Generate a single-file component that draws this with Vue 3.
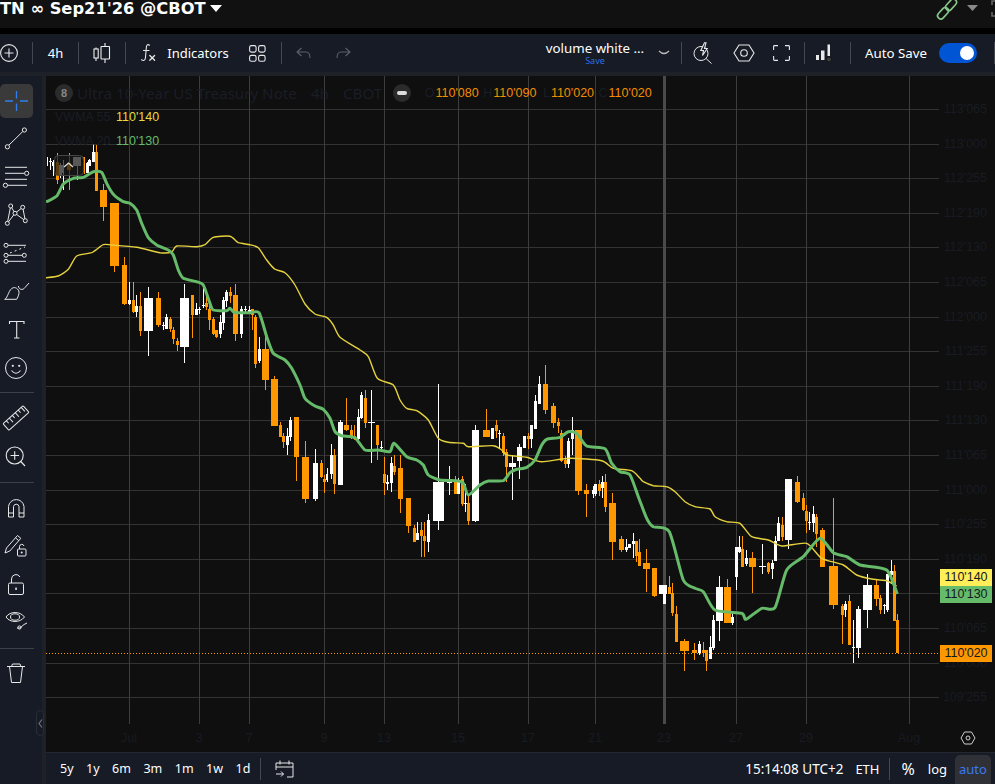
<script setup>
const z = (o, ox, oy) => o.map(([x, a, b, c, d, k, w]) => ({
  x: ox + x / 3, wt: oy + a / 3, wb: oy + b / 3, bt: oy + c / 3, bb: oy + d / 3, k, w: w / 3,
}))
const c7 = [
  [20,50,78,60,62,'w',3],[30,55,90,62,65,'w',9],[38,60,108,65,78,'w',6],[52,38,130,65,120,'o',9],[60,70,115,75,105,'w',9],
  [70,60,150,75,100,'w',6],[88,38,150,68,90,'o',12],[112,50,118,52,80,'w',24],[131,50,100,52,97,'o',6],[140,65,97,68,97,'w',9],
  [148,58,80,60,78,'w',8],[160,12,65,36,65,'w',9],[169,15,152,36,152,'o',9],[190,133,245,150,200,'o',21],[223,190,398,190,378,'o',27],
  [253,352,497,375,492,'o',15],[268,427,497,480,492,'w',8],[280,427,520,480,516,'o',9],[289,465,530,498,516,'w',9],[301,457,588,498,573,'o',9],
  [325,442,650,475,573,'w',27],[355,457,563,475,557,'o',15],[370,545,570,554,557,'w',9],[379,522,568,532,567,'w',9],[391,532,578,538,568,'o',9],
  [400,560,612,570,597,'o',9],[412,595,635,603,615,'o',9],[433,432,668,475,621,'w',27],[457,465,593,465,525,'o',9],[469,490,525,507,525,'w',9],
  [477,500,522,508,511,'w',9],[490,433,505,496,499,'w',9],[499,465,510,489,500,'o',8],[508,490,570,507,540,'o',9],[520,532,585,537,582,'o',8],
  [529,570,593,570,590,'o',9],[541,525,593,546,582,'w',9],[550,472,570,480,550,'w',8],[559,450,500,455,482,'w',8],[571,442,490,456,468,'o',8],
  [586,432,602,465,582,'o',15],[604,498,594,508,582,'w',9],[616,498,520,508,511,'w',9],[628,498,520,510,515,'w',9],[637,510,570,508,525,'o',9],
  [646,525,683,530,672,'o',9],
]
const c11 = [
  [13,-10,68,27,62,'w',8],[31,-10,150,27,120,'o',21],[58,108,258,117,258,'o',21],[76,247,290,255,290,'o',9],[85,280,326,288,305,'o',8],
  [97,265,345,288,315,'w',8],[106,232,305,240,290,'w',8],[124,232,425,232,353,'o',15],[151,303,488,351,476,'o',21],[181,327,482,369,476,'w',15],
  [199,361,415,369,410,'o',8],[208,405,458,418,428,'o',9],[217,385,428,403,420,'w',6],
]
const c8 = [
  [94,282,386,316,374,'w',9],[103,298,434,316,404,'o',9],[121,210,405,216,404,'w',15],[139,144,243,226,242,'o',15],[154,225,268,240,265,'o',8],
  [163,226,270,258,268,'o',8],[175,178,273,202,268,'w',9],[184,127,208,135,205,'w',8],[196,120,233,144,219,'o',9],[214,120,338,216,219,'w',20],
  [232,225,330,225,285,'o',9],[244,272,295,291,294,'w',8],[253,320,434,372,399,'o',9],[262,375,420,396,403,'w',9],[274,322,428,339,399,'w',9],
  [283,315,375,348,366,'o',9],[301,316,491,354,446,'o',15],[325,444,548,444,527,'o',15],[343,525,575,534,575,'o',9],[352,517,570,549,570,'w',8],
  [364,517,623,541,560,'o',9],[373,517,623,559,575,'o',9],[385,492,605,510,575,'w',9],[415,102,539,396,513,'w',33],[448,348,434,387,399,'w',15],
  [466,378,432,396,432,'o',9],[475,385,432,390,432,'w',8],[487,378,467,387,461,'o',9],[496,402,486,459,462,'w',9],[505,432,524,459,512,'o',9],
  [526,225,516,240,513,'w',21],[559,177,262,240,261,'o',21],[577,235,267,235,267,'w',9],[589,210,265,225,243,'o',8],[598,240,298,249,252,'w',9],
  [610,250,320,258,309,'o',9],[619,297,396,306,351,'o',9],[637,316,452,339,351,'w',21],[658,283,387,291,333,'w',15],[673,258,294,258,294,'w',9],
  [685,250,297,258,267,'o',9],[694,225,295,225,267,'w',9],[706,135,237,153,237,'w',9],[718,79,162,102,162,'w',9],[736,45,192,102,180,'o',15],
  [760,159,234,168,219,'o',15],[775,205,250,216,228,'o',9],[784,240,336,250,333,'o',9],[796,318,354,330,342,'o',9],[805,265,355,273,342,'w',9],
  [817,201,316,240,267,'w',9],[835,240,435,240,423,'o',21],[859,402,500,420,432,'o',15],[878,408,444,420,432,'w',9],[886,402,438,402,432,'w',9],
  [898,390,438,402,423,'o',9],[907,378,444,396,414,'w',9],[916,372,486,396,471,'o',9],[937,429,630,459,576,'o',21],[964,558,606,567,600,'o',15],
  [979,567,606,591,600,'w',9],[988,582,594,582,594,'w',9],[1000,550,624,573,582,'w',9],[1009,573,636,573,618,'o',9],
]
const c9 = [
  [58,238,320,276,318,'o',9],[79,268,398,309,327,'o',21],[103,324,412,324,408,'o',15],[121,375,402,375,402,'w',9],[128,375,402,375,402,'w',21],
  [133,375,432,402,432,'w',9],[148,348,402,381,402,'o',9],[157,370,468,399,459,'o',8],[169,438,546,462,546,'o',8],[193,537,632,543,573,'o',27],
  [223,550,600,570,580,'o',15],[238,543,585,552,580,'w',9],[250,545,590,570,579,'o',9],[259,570,632,570,603,'o',9],[271,528,597,561,597,'w',9],
  [280,465,570,480,564,'w',9],[298,348,542,381,483,'w',21],[322,357,489,381,489,'o',21],[337,462,495,470,489,'w',8],[349,260,390,261,351,'w',9],
  [358,228,280,261,276,'w',8],[367,228,321,267,321,'o',9],[379,270,318,294,312,'w',9],[397,276,399,294,321,'o',21],[427,252,342,317,320,'w',21],
  [445,306,342,309,336,'o',9],[457,300,357,309,327,'w',9],[466,228,303,243,303,'w',9],[475,170,243,189,243,'w',9],[487,172,243,195,231,'o',9],
  [505,57,267,57,240,'w',21],[532,48,129,66,126,'o',15],[550,99,153,114,150,'o',9],[559,135,218,153,183,'o',9],[568,156,210,186,189,'w',9],
  [580,138,217,162,189,'w',9],[589,162,262,171,222,'o',9],[607,204,322,210,321,'o',15],[640,114,447,318,435,'o',27],[667,432,552,438,465,'o',9],
  [676,423,471,432,450,'w',9],[688,405,556,423,555,'o',9],[700,480,609,561,564,'w',9],[715,438,594,447,564,'w',15],[742,342,504,375,450,'w',27],
  [769,360,438,375,417,'o',15],[781,405,462,414,450,'o',9],[793,432,462,436,439,'w',9],[802,342,456,342,450,'w',9],[814,300,372,333,345,'w',9],
  [823,316,483,333,483,'o',9],[832,462,580,480,580,'o',9],
]
const candles = [...z(c7, 40, 140), ...z(c11, 255, 340), ...z(c8, 300, 350), ...z(c9, 620, 460)].map((c) => {
  const w = Math.max(1, Math.round(c.w))
  const cx = Math.round(c.x)
  return {
    wx: cx, wy: Math.round(c.wt), wh: Math.max(1, Math.round(c.wb - c.wt)),
    bx: cx - Math.floor(w / 2), by: Math.round(c.bt), bw: w, bh: Math.max(1, Math.round(c.bb - c.bt)),
    col: c.k === 'o' ? '#ff9800' : '#ffffff',
  }
})
const conv = (pts, ox, oy) => pts.map(([x, y]) => [ox + x / 3, oy + y / 3])
const smooth = (p) => {
  let d = `M${p[0][0].toFixed(1)} ${p[0][1].toFixed(1)}`
  const t = 9
  for (let i = 0; i < p.length - 1; i++) {
    const a = p[i - 1] || p[i], b = p[i], c = p[i + 1], e = p[i + 2] || c
    d += `C${(b[0] + (c[0] - a[0]) / t).toFixed(1)} ${(b[1] + (c[1] - a[1]) / t).toFixed(1)} ${(c[0] - (e[0] - b[0]) / t).toFixed(1)} ${(c[1] - (e[1] - b[1]) / t).toFixed(1)} ${c[0].toFixed(1)} ${c[1].toFixed(1)}`
  }
  return d
}
const green = smooth([
  ...conv([[18,186],[50,168],[70,132],[100,115],[130,112],[160,95],[185,97],[200,130],[222,165],[250,185],[270,190],[290,210],[305,250],[325,293],[350,315],[385,330],[400,345],[415,390],[430,415],[470,425],[490,435],[510,490],[520,510],[560,512],[570,505],[585,518],[630,518],[657,518],[680,590]], 40, 140),
  ...conv([[55,40],[90,60],[110,85]], 255, 340),
  ...conv([[0,105],[15,145],[45,168],[70,178],[90,205],[105,245],[125,257],[165,263],[195,300],[235,300],[270,305],[282,280],[320,320],[350,330],[370,345],[385,375],[420,390],[470,392],[490,400],[505,435],[540,405],[565,393],[610,392],[630,368],[650,358],[680,352],[705,330],[725,285],[740,268],[780,262],[805,245],[830,250],[860,288],[915,296],[935,340],[960,365],[990,375]], 300, 350),
  ...conv([[55,110],[80,175],[100,200],[148,215],[190,360],[225,385],[250,395],[285,450],[365,460],[378,478],[425,445],[465,443],[500,330],[550,290],[600,235],[640,278],[680,290],[720,315],[800,330],[832,402]], 620, 460),
])
const yellow = smooth([
  ...conv([[18,413],[55,408],[85,388],[110,348],[155,338],[190,314],[215,315],[290,322],[360,338],[395,336],[410,318],[470,320],[495,314],[520,292],[570,289],[595,308],[630,314],[655,323],[680,360],[705,388],[735,398],[765,435],[795,492],[825,522],[860,532],[880,555],[900,592]], 40, 140),
  ...conv([[180,0],[205,20],[232,85],[280,105],[300,150],[320,175],[350,182],[385,210],[415,265],[445,277],[490,280],[505,290],[580,287],[605,300],[620,315],[680,322],[725,335],[810,325],[905,332],[940,355],[995,362],[1020,385]], 300, 350),
  ...conv([[70,65],[100,77],[140,80],[165,95],[195,125],[225,140],[270,147],[285,170],[320,185],[360,190],[395,230],[445,240],[485,258],[560,250],[605,295],[670,315],[710,345],[760,358],[800,362],[830,378]], 620, 460),
])
const hLines = Array.from({ length: 18 }, (_, i) => Math.round(109 + i * 34.6))
const vLines = [129, 199, 249, 324, 384, 458, 528, 595, 736, 806, 909]
const prices = ["113'065","113'000","112'255","112'190","112'130","112'065","112'000","111'255","111'190","111'130","111'065","111'000","110'255","110'190","110'130","110'065","110'000","109'255"]
const axis = [['Jul',129],['3',199],['7',249],['9',324],['13',384],['15',458],['17',528],['21',595],['23',664],['27',736],['29',806],['Aug',909]]
const ranges = ['5y', '1y', '6m', '3m', '1m', '1w', '1d']
</script>

<template>
  <div class="app">
    <header class="top">
      <div class="title">TN ∞ Sep21'26 @CBOT</div>
      <svg class="title-caret" width="12" height="8" viewBox="0 0 12 8"><path d="M0 0H12L6 7Z" fill="#fff"/></svg>
      <div class="top-space"></div>
      <svg class="top-right" width="60" height="28" viewBox="935 0 60 28">
        <g fill="none" stroke="#86c98a" stroke-width="1.600">
          <rect x="936.500" y="10" width="13" height="6.500" rx="3.200" transform="rotate(-48 943 13.200)"/>
          <rect x="944.500" y="1.500" width="13" height="6.500" rx="3.200" transform="rotate(-48 951 4.700)"/>
        </g>
        <path d="M967 5H978L972.500 11Z" fill="#8a8a8a"/>
        <path d="M995 1H992V5M992 12V16H995" fill="none" stroke="#666" stroke-width="1.600"/>
      </svg>
    </header>
    <div class="black"></div>

    <nav class="toolbar">
      <div class="cell c-plus"><svg width="18" height="18" viewBox="0 0 18 18"><g fill="none" stroke="#e8e8e8" stroke-width="1.100"><circle cx="9" cy="9" r="8.400"/><path d="M9 4.500V13.500M4.500 9H13.500"/></g></svg></div>
      <i class="sep"></i>
      <div class="cell c-4h">4h</div>
      <i class="sep"></i>
      <div class="cell c-candle"><svg width="18" height="22" viewBox="0 0 18 22"><g fill="none" stroke="#eee" stroke-width="1.100"><rect x="1" y="7" width="4.200" height="9"/><path d="M3 5.500V7M3 16V19"/><rect x="8" y="4.500" width="8.500" height="12.500" rx=".5"/><path d="M12 1V4.500M12 17V21"/></g></svg></div>
      <i class="sep"></i>
      <div class="cell c-fx"><svg width="16" height="20" viewBox="0 0 16 20"><g fill="none" stroke="#e8e8e8" stroke-width="1.100" stroke-linecap="round"><path d="M9.500 2.200C7.500 .8 6.600 2 6.400 4L5.400 15C5.200 17.600 3.500 18 1.500 16.800M3.500 7.500H9"/><path d="M9.800 12.500L14.600 17.300M14.600 12.500L9.800 17.300" stroke-width="1.300"/></g></svg></div>
      <div class="cell c-ind">Indicators</div>
      <div class="cell c-grid"><svg width="17" height="17" viewBox="0 0 17 17"><g fill="none" stroke="#e8e8e8" stroke-width="1.100"><rect x=".6" y=".6" width="6.500" height="6.500" rx="1.800"/><rect x="9.600" y=".6" width="6.500" height="6.500" rx="1.800"/><rect x=".6" y="10.400" width="6.500" height="5.800" rx="1.800"/><rect x="9.600" y="10.400" width="6.500" height="5.800" rx="1.800"/></g></svg></div>
      <i class="sep"></i>
      <div class="cell c-undo"><svg width="15" height="12" viewBox="0 0 15 12"><path d="M5.500 1L1 5L5.500 9M1 5H10C12.500 5 14 7 14 11" fill="none" stroke="#5d6069" stroke-width="1.100"/></svg></div>
      <div class="cell c-redo"><svg width="15" height="12" viewBox="0 0 15 12"><path d="M9.500 1L14 5L9.500 9M14 5H5C2.500 5 1 7 1 11" fill="none" stroke="#5d6069" stroke-width="1.100"/></svg></div>
      <div class="grow"></div>
      <div class="cell c-layout"><div class="lname">volume white ...</div><div class="lsave">Save</div></div>
      <div class="cell c-chev"><svg width="12" height="6" viewBox="0 0 12 6"><path d="M1 1Q6 6 11 1" fill="none" stroke="#bbb" stroke-width="1.200"/></svg></div>
      <i class="sep"></i>
      <div class="cell c-bolt"><svg width="20" height="22" viewBox="0 0 20 22"><g fill="none" stroke="#e8e8e8" stroke-width="1"><circle cx="8" cy="11.500" r="7"/><path d="M13 16.500L18.500 21.500"/><path d="M11.500 .8L7.800 8.500H10.500L9.500 13.500L14.200 6.500H11.500L13 .8Z" fill="#161b26" stroke-width="1.100"/></g></svg></div>
      <div class="cell c-hex"><svg width="22" height="18" viewBox="0 0 22 18"><g fill="none" stroke="#e8e8e8" stroke-width="1.100"><path d="M6 1H16L21 9L16 17H6L1 9Z"/><circle cx="11" cy="9" r="3.300"/></g></svg></div>
      <div class="cell c-full"><svg width="17" height="16" viewBox="0 0 17 16"><path d="M.6 5V1.500Q.6 .6 1.500 .6H5M12 .6H15.500Q16.400 .6 16.400 1.500V5M16.400 11V14.500Q16.400 15.400 15.500 15.400H12M5 15.400H1.500Q.6 15.400 .6 14.500V11" fill="none" stroke="#e8e8e8" stroke-width="1.100"/></svg></div>
      <div class="c-gap"></div>
      <i class="sep"></i>
      <div class="cell c-bars"><svg width="18" height="18" viewBox="0 0 18 18"><path d="M1 11H4V16H1ZM6 6.500H9.500V16H6Z" fill="#e8e8e8"/><path d="M12.500 .5H15V12H12.500Z" fill="#e8e8e8"/><circle cx="14" cy="15.500" r="2.500" fill="#3a3a3a" stroke="#000" stroke-width=".5"/></svg></div>
      <i class="sep"></i>
      <div class="cell c-auto">Auto Save</div>
      <div class="toggle"><span class="knob"></span></div>
      <div class="c-tail"></div>
      <i class="sep"></i>
    </nav>
    <div class="strip"></div>

    <div class="main">
      <aside class="tools">
        <div class="tool t-cursor"><svg width="33" height="34" viewBox="0 0 33 34"><path d="M16.500 7V14.500M16.500 19.500V27M5 17H13M20 17H28" stroke="#2f80ed" stroke-width="1.300" fill="none"/></svg></div>
        <div class="tool"><svg width="33" height="38" viewBox="0 0 33 38"><g fill="none" stroke="#e8e8e8" stroke-width="1"><path d="M9 26L22.800 12.500"/><circle cx="7.400" cy="27.800" r="2.100"/><circle cx="24.400" cy="11" r="2.100"/></g></svg></div>
        <div class="tool"><svg width="33" height="38" viewBox="0 0 33 38"><g fill="none" stroke="#e8e8e8" stroke-width="1"><path d="M5 10.300H27M5 16.300H24.500M5 22.300H27M7.500 28.300H27"/><circle cx="26.700" cy="16.300" r="2.100"/><circle cx="5.400" cy="28.300" r="2.100"/></g></svg></div>
        <div class="tool"><svg width="33" height="38" viewBox="0 0 33 38"><g fill="none" stroke="#e8e8e8" stroke-width="1"><path d="M10.700 10L15 17.300L22.700 11.300L25.300 24.700L15 17.300L7.300 27.300L10.700 10"/><g fill="#161b26"><circle cx="10.700" cy="10" r="2"/><circle cx="22.700" cy="11.300" r="2"/><circle cx="15" cy="17.300" r="2"/><circle cx="7.300" cy="27.300" r="2"/><circle cx="25.300" cy="24.700" r="2"/></g></g></svg></div>
        <div class="tool"><svg width="33" height="38" viewBox="0 0 33 38"><g fill="none" stroke="#e8e8e8" stroke-width="1"><path d="M8 11.300H26M8 21.300H22.300M8 27.300H26"/><path d="M10 19L25 13" stroke-dasharray="2 3"/><circle cx="6" cy="11.300" r="2"/><circle cx="6" cy="21.300" r="2"/><circle cx="24.300" cy="21.300" r="2"/><circle cx="6" cy="27.300" r="2"/></g></svg></div>
        <div class="tool"><svg width="33" height="38" viewBox="0 0 33 38"><g fill="none" stroke="#e8e8e8" stroke-width="1"><path d="M4.700 27.300C8 26 8.500 17 13.300 15.700C16.500 15 19.500 18 19 21.300C18.500 24 17.500 26 16.700 27.300Z"/><path d="M18.300 14C19 18 23 18.500 25 15.500L29 11"/></g></svg></div>
        <div class="tool"><svg width="33" height="38" viewBox="0 0 33 38"><g fill="none" stroke="#e8e8e8" stroke-width="1.100"><path d="M9.500 13V10.500H24V13M16.700 10.500V27M14 27H19.500"/></g></svg></div>
        <div class="tool"><svg width="33" height="38" viewBox="0 0 33 38"><g fill="none" stroke="#e8e8e8" stroke-width="1"><circle cx="16" cy="19" r="10.500"/><path d="M11.500 21.500Q16 27 20.500 21.500" stroke-width="1.100"/></g><circle cx="12.800" cy="16.800" r="1.100" fill="#e8e8e8"/><circle cx="19.200" cy="16.800" r="1.100" fill="#e8e8e8"/></svg></div>
        <div class="rule r-a"></div>
        <div class="tool"><svg width="33" height="38" viewBox="0 0 33 38"><g transform="rotate(-42 16 19)" fill="none" stroke="#e8e8e8" stroke-width="1"><rect x="2.500" y="14.500" width="27" height="9" rx="1"/><path d="M7 14.500V18M11 14.500V20M15 14.500V18M19 14.500V20M23 14.500V18M27 14.500V20"/></g></svg></div>
        <div class="tool"><svg width="33" height="38" viewBox="0 0 33 38"><g fill="none" stroke="#e8e8e8" stroke-width="1.100"><circle cx="14.700" cy="17.500" r="8.500"/><path d="M20.800 23.500L25 28"/><path d="M10.500 17.500H19M14.700 13.300V21.800"/></g></svg></div>
        <div class="rule r-b"></div>
        <div class="tool"><svg width="33" height="38" viewBox="0 0 33 38"><g fill="none" stroke="#e8e8e8" stroke-width="1"><path d="M8.500 28V17.500A7.800 7.800 0 0 1 24 17.500V28H19V17.500A2.800 2.800 0 0 0 13.500 17.500V28Z"/><path d="M8.500 24H13.500M19 24H24"/></g></svg></div>
        <div class="tool"><svg width="33" height="38" viewBox="0 0 33 38"><g fill="none" stroke="#e8e8e8" stroke-width="1"><path d="M5 26L6.500 21L17.500 8.500L20.800 11.300L9.800 24L5 26ZM15.500 10.800L18.800 13.700"/><rect x="17.500" y="22" width="8.500" height="7" rx="1"/><path d="M19.500 22V19.500A2.300 2.300 0 0 1 24 19"/></g><circle cx="21.700" cy="25.500" r="1" fill="#e8e8e8"/></svg></div>
        <div class="tool"><svg width="33" height="38" viewBox="0 0 33 38"><g fill="none" stroke="#e8e8e8" stroke-width="1"><rect x="8.500" y="18" width="15" height="11.500" rx="1.500"/><path d="M11.500 18V14A4.500 4.500 0 0 1 20 12"/></g><rect x="15.300" y="22.500" width="1.500" height="2.500" fill="#e8e8e8"/></svg></div>
        <div class="tool t-eye"><svg width="33" height="38" viewBox="0 0 33 38"><g fill="none" stroke="#e8e8e8" stroke-width="1"><path d="M6 15C10 9 20 9 24.500 15C20 21 10 21 6 15Z"/><ellipse cx="15" cy="15" rx="4.500" ry="3.200"/><path d="M17 26L20 26L24 22.500L27 21" /><circle cx="19.500" cy="25.500" r="1.600"/></g></svg></div>
        <div class="rule r-c"></div>
        <div class="tool"><svg width="33" height="38" viewBox="0 0 33 38"><g fill="none" stroke="#e8e8e8" stroke-width="1"><path d="M7 11.500H25M11.500 11.500L12.500 9H20L21 11.500"/><path d="M9.500 11.500L11.500 27.500H20.500L22.500 11.500"/></g></svg></div>
        <div class="handle"><svg width="5" height="9" viewBox="0 0 5 9"><path d="M4 .5L1 4.500L4 8.500" fill="none" stroke="#70737b" stroke-width="1.200"/></svg></div>
      </aside>
      <div class="vstrip"></div>
      <div class="right">
        <section class="chart">
          <svg class="plot" width="949" height="676" viewBox="46 76 949 676">
            <rect v-for="y in hLines" :key="'h'+y" x="46" :y="y" width="893" height="1" fill="#333333"/>
            <rect v-for="x in vLines" :key="'v'+x" :x="x" y="76" width="1" height="648" fill="#3d3d3d"/>
            <rect x="663" y="76" width="3" height="648" fill="#4a4a4a"/>
            <text v-for="(p, i) in prices" :key="p" class="ptxt" x="987" :y="hLines[i] + 4" text-anchor="end">{{ p }}</text>
            <text v-for="a in axis" :key="a[0]+a[1]" class="atxt" :x="a[1]" y="742" text-anchor="middle">{{ a[0] }}</text>
            <g shape-rendering="crispEdges">
              <template v-for="(c, i) in candles" :key="i">
                <rect :x="c.wx" :y="c.wy" width="1" :height="c.wh" :fill="c.col"/>
                <rect :x="c.bx" :y="c.by" :width="c.bw" :height="c.bh" :fill="c.col"/>
              </template>
            </g>
            <path :d="yellow" fill="none" stroke="#e6d23e" stroke-width="1.400"/>
            <path :d="green" fill="none" stroke="#66bb6a" stroke-width="3" stroke-linejoin="round"/>
            <line x1="46" y1="653.500" x2="940" y2="653.500" stroke="#ff9800" stroke-width="1" stroke-dasharray="1 2"/>
            <rect x="54.500" y="155.500" width="29" height="20" rx="4" fill="rgba(24,24,24,.72)" stroke="#444"/>
            <path d="M64 167L68.500 163L73 167" fill="none" stroke="#ddd" stroke-width="1.300"/>
            <path d="M961 738L964.500 732H971.500L975 738L971.500 744H964.500Z" fill="none" stroke="#cfcfcf" stroke-width="1"/>
            <circle cx="968" cy="738" r="2" fill="none" stroke="#cfcfcf" stroke-width="1"/>
          </svg>
          <div class="legend">
            <span class="badge">8</span>
            <span class="ltitle">Ultra 10-Year US Treasury Note<b class="dot"></b>4h<b class="dot"></b>CBOT</span>
            <span class="minus"><i></i></span>
            <span class="ohlc first"><em>O</em><span>110'080</span></span>
            <span class="ohlc"><em>H</em><span>110'090</span></span>
            <span class="ohlc"><em>L</em><span>110'020</span></span>
            <span class="ohlc"><em>C</em><span>110'020</span></span>
          </div>
          <div class="study s1"><em>VWMA 55</em><span class="yl">110'140</span></div>
          <div class="study s2"><em>VWMA 20</em><span class="gr">110'130</span></div>
          <div class="tags">
            <div class="tag ty">110'140</div>
            <div class="tag tg">110'130</div>
            <div class="tag to">110'020</div>
          </div>
        </section>
        <footer class="bottom">
          <span v-for="r in ranges" :key="r" class="range">{{ r }}</span>
          <i class="bsep"></i>
          <svg class="cal" width="19" height="19" viewBox="0 0 19 19"><path d="M1 8V4H18V18H12M1 8H18M5 1.500V5.500M14 1.500V5.500M1 8V11M1 15H8.500M6 12.500L8.500 15L6 17.500" fill="none" stroke="#e8e8e8" stroke-width="1"/></svg>
          <div class="grow"></div>
          <span class="clock">15:14:08 UTC+2</span>
          <span class="eth">ETH</span>
          <i class="bsep b2"></i>
          <span class="pct">%</span>
          <span class="log">log</span>
          <span class="auto">auto</span>
        </footer>
      </div>
    </div>
  </div>
</template>

<style>
html, body { margin: 0; background: #0f0f0f; overflow: hidden; }
</style>

<style scoped>
.app { width: 995px; height: 784px; display: flex; flex-direction: column; overflow: hidden; font-family: "Noto Sans", sans-serif; color: #fff; background: #161b26; }
.top { height: 28px; flex: none; background: #111111; display: flex; align-items: flex-start; overflow: hidden; }
.title { font: bold 16.300px/18px "DejaVu Sans", sans-serif; white-space: nowrap; }
.title-caret { margin: 5px 0 0 4px; }
.top-space, .grow { flex: 1; }
.black { height: 6px; flex: none; background: #000; }
.toolbar { height: 38px; flex: none; display: flex; align-items: center; background: #161b26; font-size: 13px; }
.cell { display: flex; align-items: center; justify-content: center; height: 100%; white-space: nowrap; }
.sep { width: 1px; height: 22px; background: #444750; flex: none; }
.c-plus { width: 32px; padding-right: 14px; box-sizing: border-box; }
.c-4h { width: 45px; }
.c-candle { width: 46px; }
.c-fx { width: 36px; padding-left: 8px; box-sizing: border-box; }
.c-ind { width: 72px; }
.c-grid { width: 47px; }
.c-undo { width: 43px; }
.c-redo { width: 36px; }
.c-layout { width: 130px; padding-left: 6px; box-sizing: border-box; flex-direction: column; }
.lname { font-size: 13.300px; line-height: 15px; }
.lsave { font-size: 9px; line-height: 10px; color: #2f6fe0; }
.c-chev { width: 24px; padding-right: 10px; box-sizing: border-box; }
.c-bolt { width: 42px; }
.c-hex { width: 39px; }
.c-full { width: 36px; }
.c-gap { width: 5px; }
.c-bars { width: 45px; padding-right: 8px; box-sizing: border-box; }
.c-auto { width: 88px; padding-left: 14px; box-sizing: border-box; justify-content: flex-start; font-size: 13.300px; }
.toggle { width: 38px; height: 20px; border-radius: 10px; background: #0055d4; position: relative; flex: none; }
.knob { position: absolute; right: 3px; top: 3px; width: 14px; height: 14px; border-radius: 50%; background: #fff; }
.c-tail { width: 17px; }
.strip { height: 4px; flex: none; background: #1e2128; }
.main { flex: 1; display: flex; min-height: 0; }
.tools { width: 42px; flex: none; background: #161b26; display: flex; flex-direction: column; padding-top: 8px; box-sizing: border-box; position: relative; }
.tool { width: 33px; height: 38.300px; display: flex; align-items: center; justify-content: center; flex: none; }
.t-cursor { height: 34px; background: #3a3a3a; border-radius: 5px; margin-bottom: 1px; }
.t-eye { margin-top: -2px; margin-bottom: 2px; }
.rule { width: 34px; height: 1px; background: #3d4048; flex: none; }
.r-a { margin: 5px 0 6px; }
.r-b { margin: 6px 0 6px; }
.r-c { margin: 6px 0 6px; }
.handle { position: absolute; left: 36px; top: 634px; width: 8px; height: 26px; border: 1px solid #2a2d35; border-radius: 5px; box-sizing: border-box; display: flex; align-items: center; justify-content: center; background: #161b26; }
.vstrip { width: 4px; flex: none; background: #1e2128; }
.right { flex: 1; display: flex; flex-direction: column; min-width: 0; }
.chart { height: 676px; flex: none; position: relative; background: #0f0f0f; overflow: hidden; }
.plot { display: block; }
.ptxt { font: 12.500px "Liberation Sans", sans-serif; fill: #191b22; }
.atxt { font: 12.500px "Liberation Sans", sans-serif; fill: #191b22; }
.legend { position: absolute; left: 9px; top: 7px; height: 19px; display: flex; align-items: center; font-family: "Liberation Sans", sans-serif; }
.badge { width: 18px; height: 18px; border-radius: 50%; background: #2b2b2b; color: #888; font-size: 11px; font-weight: bold; text-align: center; line-height: 18px; }
.ltitle { color: #1a1d26; font: 15.200px/18px "Noto Sans", sans-serif; margin-left: 4px; display: inline-flex; align-items: center; width: 300px; white-space: nowrap; }
.dot { width: 2px; height: 2px; background: #ddd; margin: 0 7px; }
.minus { width: 18px; height: 18px; border-radius: 50%; background: #2b2b2b; display: flex; align-items: center; justify-content: center; margin-left: 16px; }
.minus i { width: 10px; height: 4px; border-radius: 2px; background: #ddd; }
.ohlc { display: inline-flex; font-size: 12.500px; color: #f28c00; width: 57.700px; justify-content: flex-end; }
.first { margin-left: 10px; }
.ohlc em { font-style: normal; color: #1a1d26; margin-right: 1px; }
.study { position: absolute; left: 9px; height: 16px; display: flex; align-items: center; font: 12.500px/16px "Liberation Sans", sans-serif; }
.s1 { top: 33px; }
.s2 { top: 57px; }
.study em { font-style: normal; color: #1a1d26; width: 61px; }
.yl { color: #e8d93e; }
.gr { color: #66bb6a; }
.tags { position: absolute; left: 894px; top: 493px; width: 52px; color: #131722; font: 12.500px/17px "Liberation Sans", sans-serif; text-align: center; }
.tag { height: 17px; }
.ty { background: #ffee58; }
.tg { background: #66bb6a; }
.to { background: #ff9800; margin-top: 42px; }
.bottom { flex: 1; display: flex; align-items: center; background: #161b26; border-top: 1px solid #24272f; box-sizing: border-box; padding-left: 14px; font-size: 12.500px; }
.range { margin-right: 12.500px; }
.bsep { width: 1px; height: 22px; background: #444750; margin-left: -3px; }
.cal { margin-left: 14px; }
.clock { margin-right: 12px; font-size: 13.500px; }
.eth { margin-right: 10px; font-size: 13px; }
.b2 { margin-left: 0; }
.pct { font-size: 16px; margin-left: 11px; }
.log { margin-left: 13px; font-size: 13px; }
.auto { margin: 0 4px 0 8px; width: 36px; height: 29px; line-height: 29px; background: #2f3136; color: #3b78f0; border-radius: 5px 5px 0 0; text-align: center; align-self: flex-end; font-size: 13px; }
</style>
